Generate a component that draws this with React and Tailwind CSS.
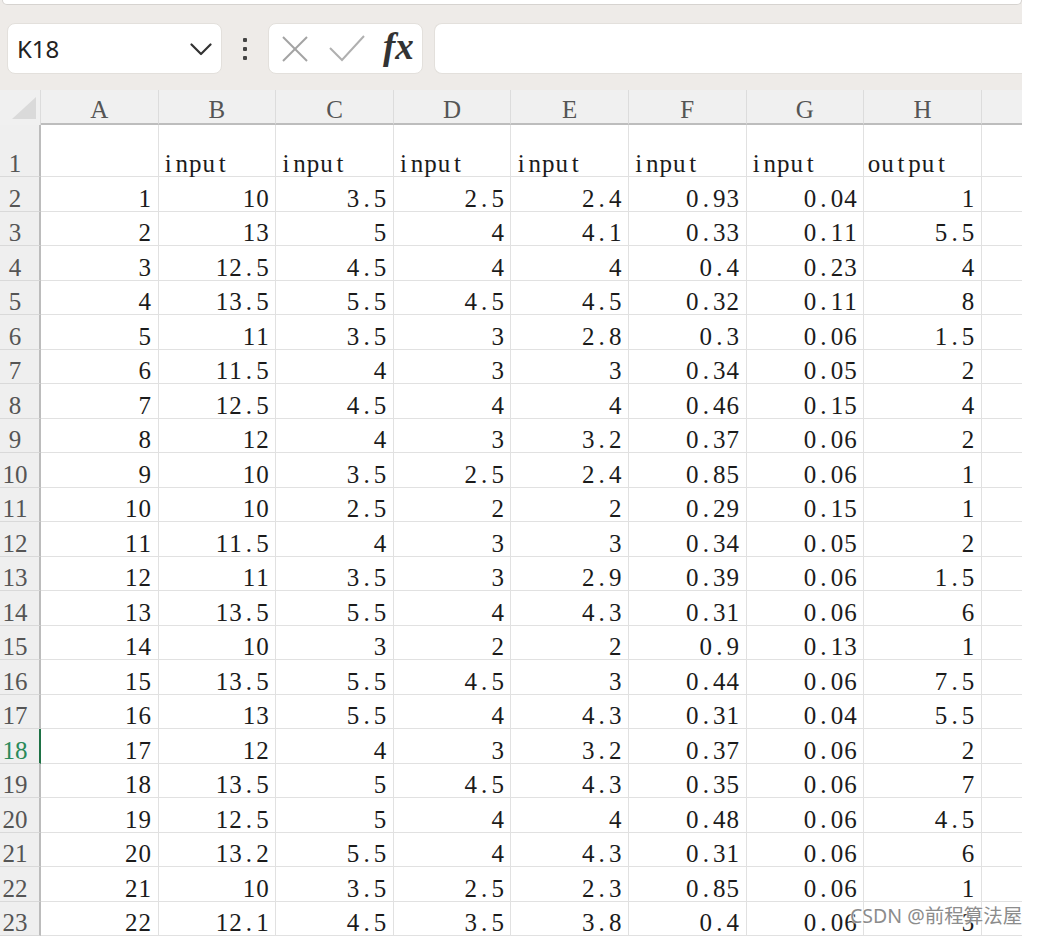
import React from "react";

const COLS = ["A", "B", "C", "D", "E", "F", "G", "H"];

const DATA = [
  ["1", "10", "3.5", "2.5", "2.4", "0.93", "0.04", "1"],
  ["2", "13", "5", "4", "4.1", "0.33", "0.11", "5.5"],
  ["3", "12.5", "4.5", "4", "4", "0.4", "0.23", "4"],
  ["4", "13.5", "5.5", "4.5", "4.5", "0.32", "0.11", "8"],
  ["5", "11", "3.5", "3", "2.8", "0.3", "0.06", "1.5"],
  ["6", "11.5", "4", "3", "3", "0.34", "0.05", "2"],
  ["7", "12.5", "4.5", "4", "4", "0.46", "0.15", "4"],
  ["8", "12", "4", "3", "3.2", "0.37", "0.06", "2"],
  ["9", "10", "3.5", "2.5", "2.4", "0.85", "0.06", "1"],
  ["10", "10", "2.5", "2", "2", "0.29", "0.15", "1"],
  ["11", "11.5", "4", "3", "3", "0.34", "0.05", "2"],
  ["12", "11", "3.5", "3", "2.9", "0.39", "0.06", "1.5"],
  ["13", "13.5", "5.5", "4", "4.3", "0.31", "0.06", "6"],
  ["14", "10", "3", "2", "2", "0.9", "0.13", "1"],
  ["15", "13.5", "5.5", "4.5", "3", "0.44", "0.06", "7.5"],
  ["16", "13", "5.5", "4", "4.3", "0.31", "0.04", "5.5"],
  ["17", "12", "4", "3", "3.2", "0.37", "0.06", "2"],
  ["18", "13.5", "5", "4.5", "4.3", "0.35", "0.06", "7"],
  ["19", "12.5", "5", "4", "4", "0.48", "0.06", "4.5"],
  ["20", "13.2", "5.5", "4", "4.3", "0.31", "0.06", "6"],
  ["21", "10", "3.5", "2.5", "2.3", "0.85", "0.06", "1"],
  ["22", "12.1", "4.5", "3.5", "3.8", "0.4", "0.06", "3"],
];

const serif = "font-['Liberation_Serif','Noto_Sans_CJK_SC',serif]";

function Mono({ text, narrow }) {
  return (
    <span className="inline-flex">
      {text.split("").map((c, i) => (
        <span
          key={i}
          className={
            narrow
              ? "inline-block w-[12.5px] text-center"
              : "inline-block w-[13.5px] text-center"
          }
        >
          {c}
        </span>
      ))}
    </span>
  );
}

function Toolbar() {
  return (
    <div className="h-[90px] bg-[#eeebe8] flex flex-col">
      <div className="h-[5px] ml-[2px] bg-white rounded-b-[8px] border-b border-x border-[#d6d3d0]" />
      <div className="flex items-center mt-[18px] h-[51px]">
        {/* name box */}
        <div className="ml-[7px] w-[215px] h-[51px] bg-white rounded-[8px] border border-[#e3e0dc] flex items-center pl-[9px] pr-[9px]">
          <span className="font-['Noto_Sans',sans-serif] text-[24px] text-[#222] leading-none">
            K18
          </span>
          <div className="flex-1" />
          <svg width="22" height="13" viewBox="0 0 22 13" className="mt-[1px]">
            <polyline
              points="1.5,1.5 11,11 20.5,1.5"
              fill="none"
              stroke="#333"
              strokeWidth="2.2"
              strokeLinecap="round"
              strokeLinejoin="round"
            />
          </svg>
        </div>
        {/* dots */}
        <div className="w-[46px] flex flex-col items-center gap-[5px]">
          <div className="w-[4px] h-[4px] rounded-[1px] bg-[#444]" />
          <div className="w-[4px] h-[4px] rounded-[1px] bg-[#444]" />
          <div className="w-[4px] h-[4px] rounded-[1px] bg-[#444]" />
        </div>
        {/* function box */}
        <div className="w-[155px] h-[51px] bg-white rounded-[8px] border border-[#e3e0dc] flex items-center pl-[13px]">
          <svg width="26" height="26" viewBox="0 0 26 26">
            <line x1="1" y1="1" x2="25" y2="25" stroke="#a3a3a3" strokeWidth="2" />
            <line x1="25" y1="1" x2="1" y2="25" stroke="#a3a3a3" strokeWidth="2" />
          </svg>
          <svg width="36" height="27" viewBox="0 0 36 27" className="ml-[21px]">
            <polyline
              points="1,13 13,25 35,1"
              fill="none"
              stroke="#b0b0b0"
              strokeWidth="2"
            />
          </svg>
          <span className="ml-[18px] font-['Liberation_Serif',serif] italic font-bold text-[37px] leading-none text-[#333] -mt-[4px]">
            fx
          </span>
        </div>
        {/* formula input */}
        <div className="ml-[11px] flex-1 h-[51px] bg-white rounded-l-[8px] border-y border-l border-[#e3e0dc]" />
      </div>
    </div>
  );
}

function HeaderRow() {
  return (
    <div className={`flex h-[35px] bg-[#f0f0f0] ${serif}`}>
      <div className="w-[41px] shrink-0 border-r border-[#dcdcdc] flex items-end justify-end pr-[4px] pb-[6px]">
        <svg width="24" height="22" viewBox="0 0 24 22">
          <polygon points="24,0 24,22 0,22" fill="#dadada" />
        </svg>
      </div>
      {COLS.map((c) => (
        <div
          key={c}
          className="w-[117.6px] shrink-0 border-r border-r-[#dcdcdc] border-b-2 border-b-[#bdbdbd] flex items-end justify-center text-[25px] leading-[26px] text-[#555]"
        >
          {c}
        </div>
      ))}
      <div className="flex-1 border-b-2 border-b-[#bdbdbd]" />
    </div>
  );
}

function RowHeader({ n, selected }) {
  return (
    <div
      className={
        "w-[41px] shrink-0 bg-[#efefef] border-r-2 border-b border-b-[#d9d9d9] flex items-end justify-center pr-[9px] text-[25px] leading-[25px] " +
        (selected
          ? "border-r-[#1e7145] text-[#2a8a5a]"
          : "border-r-[#bcbcbc] text-[#555]")
      }
    >
      <Mono text={String(n)} narrow />
    </div>
  );
}

function FirstRow() {
  const labels = ["", "input", "input", "input", "input", "input", "input", "output"];
  return (
    <div className={`flex h-[52px] ${serif}`}>
      <RowHeader n={1} />
      {labels.map((t, i) => (
        <div
          key={i}
          className="w-[117.6px] shrink-0 border-r border-b border-[#e1e1e1] flex items-end pl-[3px] text-[25px] leading-[25px] text-[#1b1b1b]"
        >
          <Mono text={t} />
        </div>
      ))}
      <div className="flex-1 border-b border-[#e1e1e1]" />
    </div>
  );
}

function DataRow({ idx, row }) {
  return (
    <div className={`flex h-[34.5px] ${serif}`}>
      <RowHeader n={idx + 2} selected={idx + 2 === 18} />
      {row.map((t, i) => (
        <div
          key={i}
          className="w-[117.6px] shrink-0 border-r border-b border-[#e1e1e1] flex items-end justify-end pr-[6px] text-[25px] leading-[25px] text-[#1b1b1b]"
        >
          <Mono text={t} />
        </div>
      ))}
      <div className="flex-1 border-b border-[#e1e1e1]" />
    </div>
  );
}

export default function App() {
  return (
    <div className="w-[1038px] h-[936px] bg-white overflow-hidden">
      <div className="relative w-[1022px] h-[936px] overflow-hidden">
        <Toolbar />
        <HeaderRow />
        <FirstRow />
        {DATA.map((r, i) => (
          <DataRow key={i} idx={i} row={r} />
        ))}
        <div className="absolute left-[850px] top-[904px] font-['Noto_Sans','Noto_Sans_CJK_SC',sans-serif] text-[19.5px] leading-[24px] text-[#8c8c8c] [text-shadow:0_0_2px_#fff,0_0_2px_#fff] whitespace-nowrap">
          CSDN @前程算法屋
        </div>
      </div>
    </div>
  );
}
